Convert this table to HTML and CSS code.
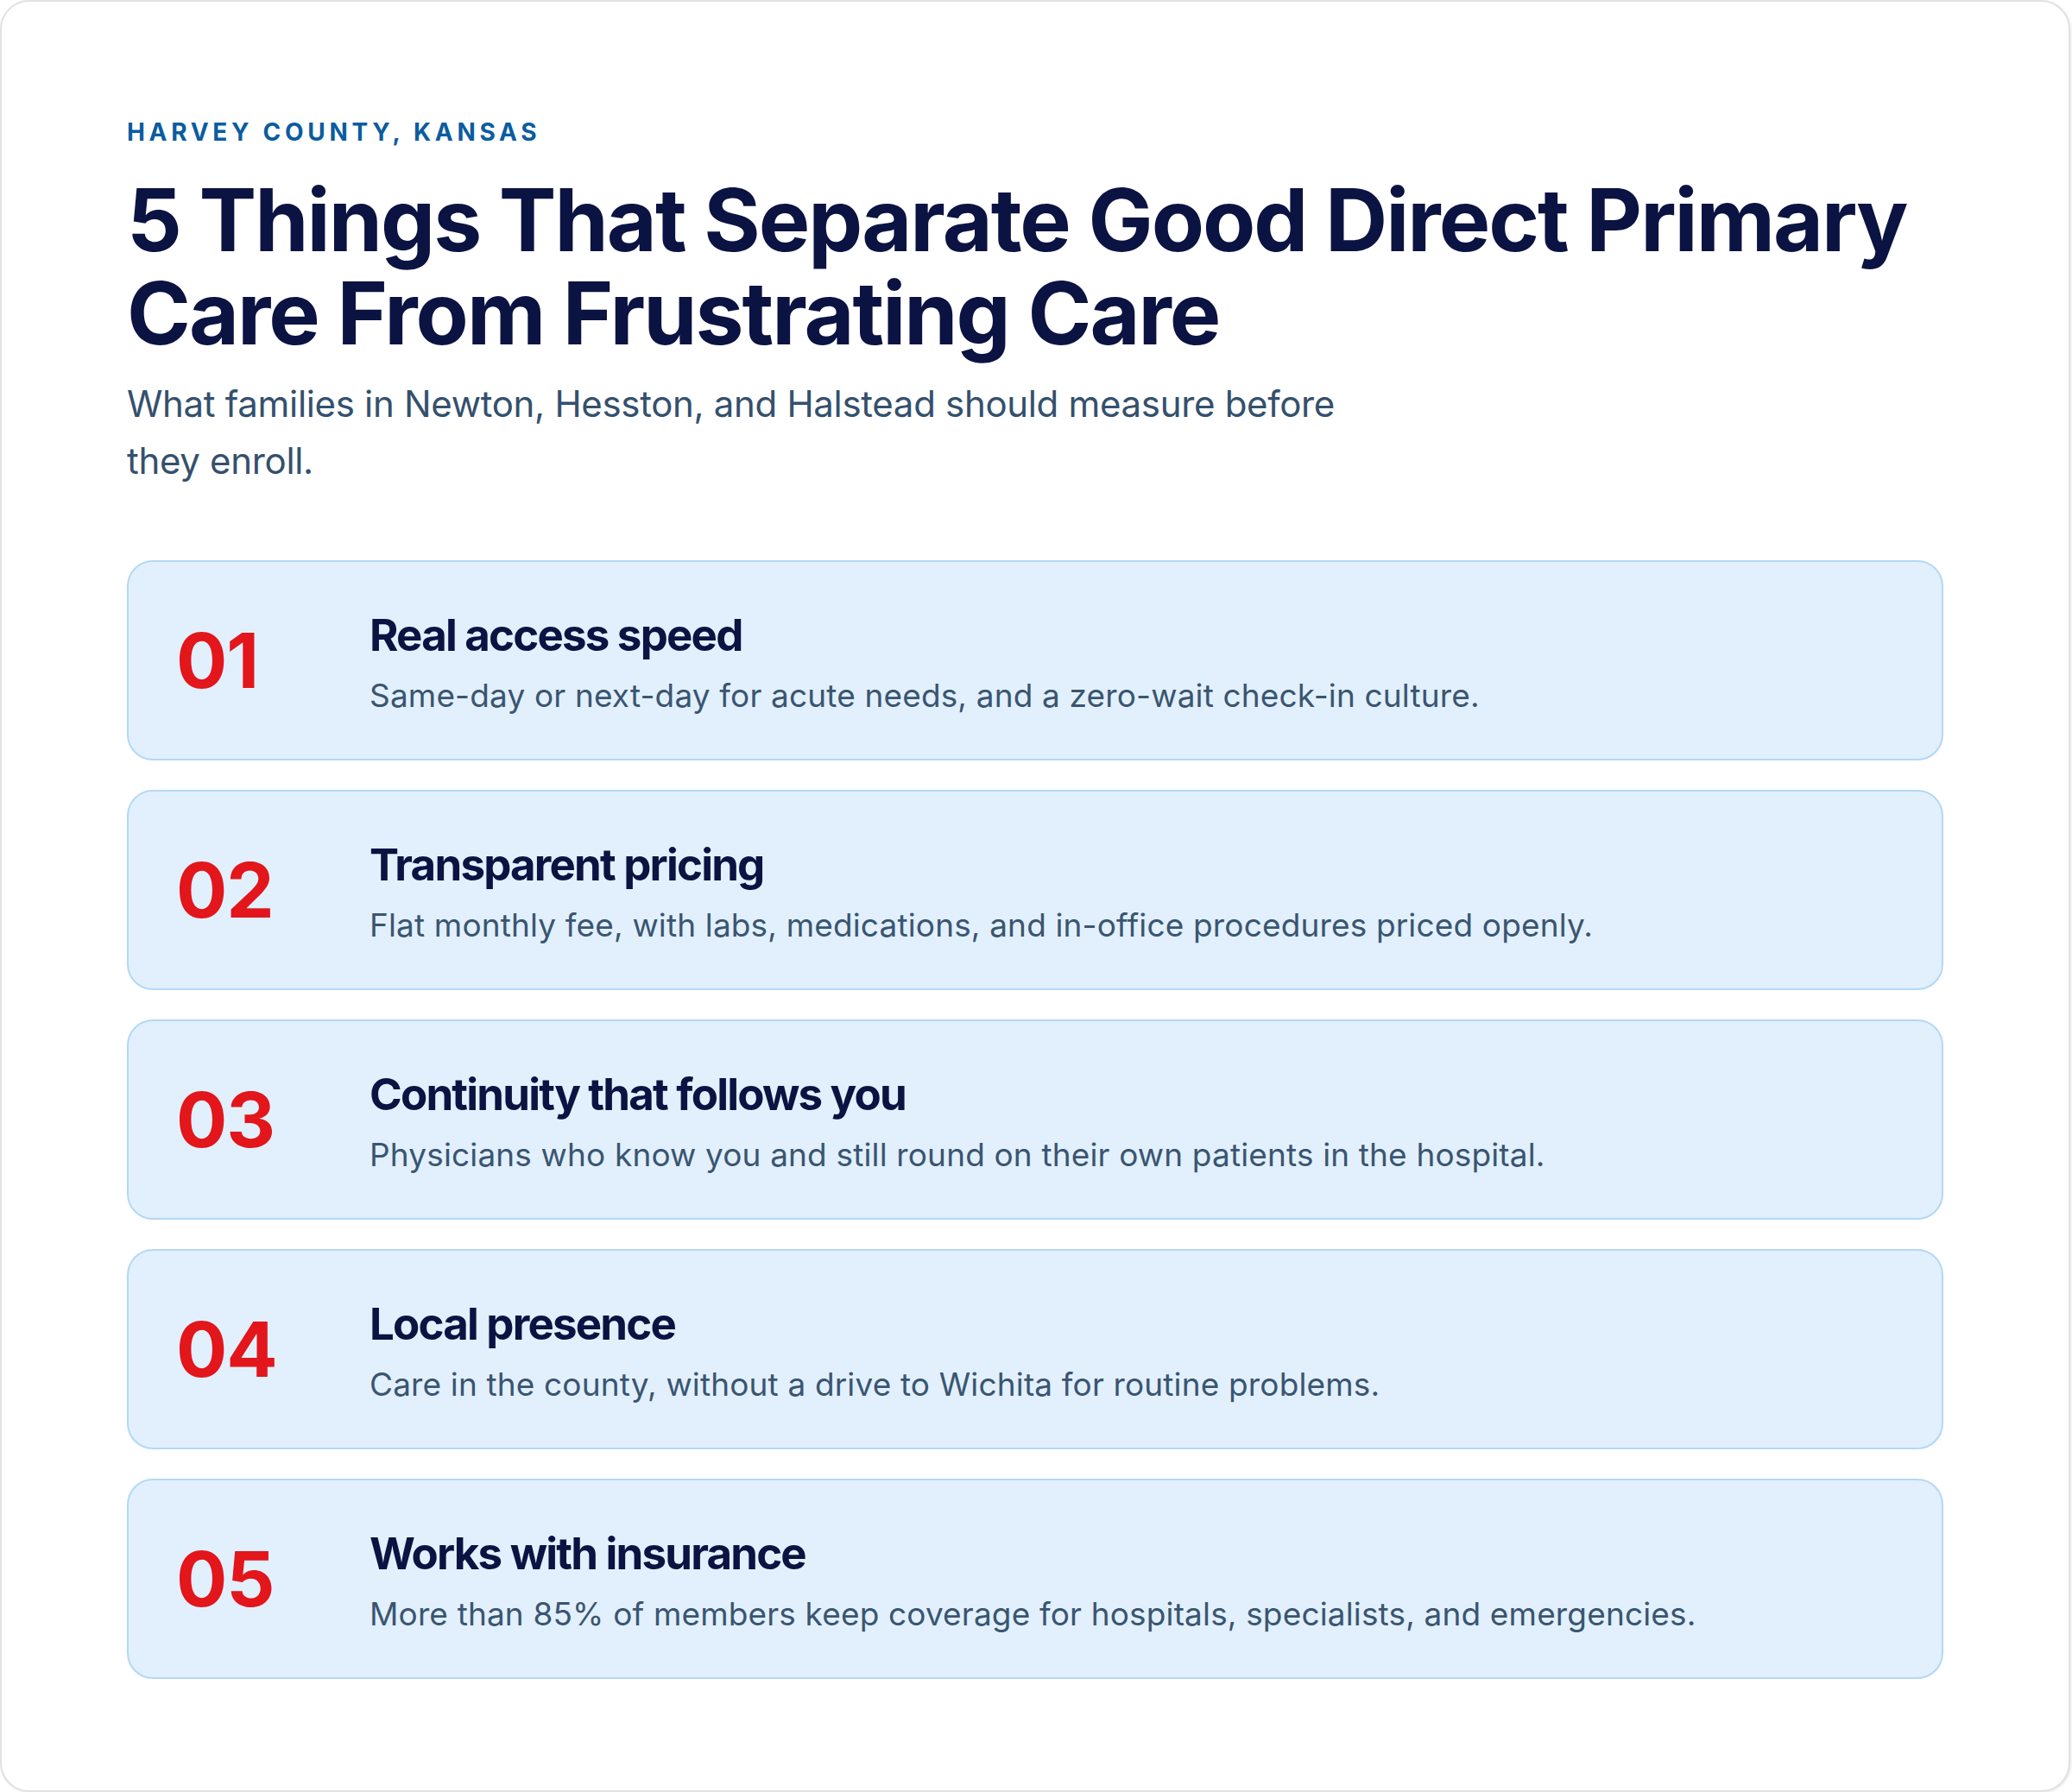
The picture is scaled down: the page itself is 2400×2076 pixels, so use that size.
FILE: index.html
```html
<!DOCTYPE html>
<html lang="en">
<head>
<meta charset="utf-8">
<title>5 Things That Separate Good Direct Primary Care From Frustrating Care</title>
<link rel="stylesheet" href="styles.css">
</head>
<body>
<main class="sheet">
  <header class="intro">
    <p class="eyebrow">Harvey County, Kansas</p>
    <h1 class="headline">5 Things That Separate Good Direct Primary Care From Frustrating Care</h1>
    <p class="lede">What families in Newton, Hesston, and Halstead should measure before they enroll.</p>
  </header>
  <ol class="points">
    <li class="point">
      <span class="point-num">01</span>
      <div class="point-body">
        <h2 class="point-title">Real access speed</h2>
        <p class="point-text">Same-day or next-day for acute needs, and a zero-wait check-in culture.</p>
      </div>
    </li>
    <li class="point">
      <span class="point-num">02</span>
      <div class="point-body">
        <h2 class="point-title">Transparent pricing</h2>
        <p class="point-text">Flat monthly fee, with labs, medications, and in-office procedures priced openly.</p>
      </div>
    </li>
    <li class="point">
      <span class="point-num">03</span>
      <div class="point-body">
        <h2 class="point-title">Continuity that follows you</h2>
        <p class="point-text">Physicians who know you and still round on their own patients in the hospital.</p>
      </div>
    </li>
    <li class="point">
      <span class="point-num">04</span>
      <div class="point-body">
        <h2 class="point-title">Local presence</h2>
        <p class="point-text">Care in the county, without a drive to Wichita for routine problems.</p>
      </div>
    </li>
    <li class="point">
      <span class="point-num">05</span>
      <div class="point-body">
        <h2 class="point-title">Works with insurance</h2>
        <p class="point-text">More than 85% of members keep coverage for hospitals, specialists, and emergencies.</p>
      </div>
    </li>
  </ol>
</main>
</body>
</html>
```
FILE: styles.css
```css
* { box-sizing: border-box; }

html, body {
  margin: 0;
  padding: 0;
  background: #ffffff;
}

body {
  font-family: "Inter", "Noto Sans", "Liberation Sans", sans-serif;
  color: #0b1342;
}

.sheet {
  width: 2398px;
  min-height: 2074px;
  background: #ffffff;
  border: 2px solid #e1e1e6;
  border-radius: 34px;
  box-shadow: 1px 1px 3px rgba(0, 0, 0, 0.10);
  padding: 134px 145px 129px;
}

.intro {
  display: flex;
  flex-direction: column;
}

.eyebrow {
  margin: 0;
  font-size: 28px;
  line-height: 34px;
  font-weight: 700;
  letter-spacing: 4.7px;
  text-transform: uppercase;
  color: #0b5ca0;
}

.headline {
  margin: 31px 0 0;
  font-size: 100px;
  line-height: 108px;
  font-weight: 700;
  letter-spacing: -2px;
  color: #0b1342;
}

.lede {
  margin: 18px 0 0;
  max-width: 1440px;
  font-size: 42px;
  line-height: 66px;
  font-weight: 400;
  letter-spacing: -0.32px;
  color: #34506d;
}

.points {
  list-style: none;
  margin: 82px 0 0;
  padding: 0;
  display: flex;
  flex-direction: column;
  gap: 34px;
}

.point {
  display: flex;
  align-items: center;
  padding: 44px 58px 44px 55px;
  background: #e2f0fd;
  border: 2px solid #b3d8f5;
  border-radius: 30px;
}

.point-num {
  flex: 0 0 224px;
  font-size: 88px;
  line-height: 88px;
  font-weight: 700;
  letter-spacing: -1px;
  color: #e2161b;
}

.point-body {
  display: flex;
  flex-direction: column;
}

.point-title {
  margin: 0;
  font-size: 51px;
  line-height: 82px;
  font-weight: 700;
  letter-spacing: -1.8px;
  color: #0b1342;
}

.point-text {
  margin: 0;
  font-size: 37px;
  line-height: 58px;
  font-weight: 400;
  letter-spacing: 0.15px;
  color: #3a5571;
}
```
